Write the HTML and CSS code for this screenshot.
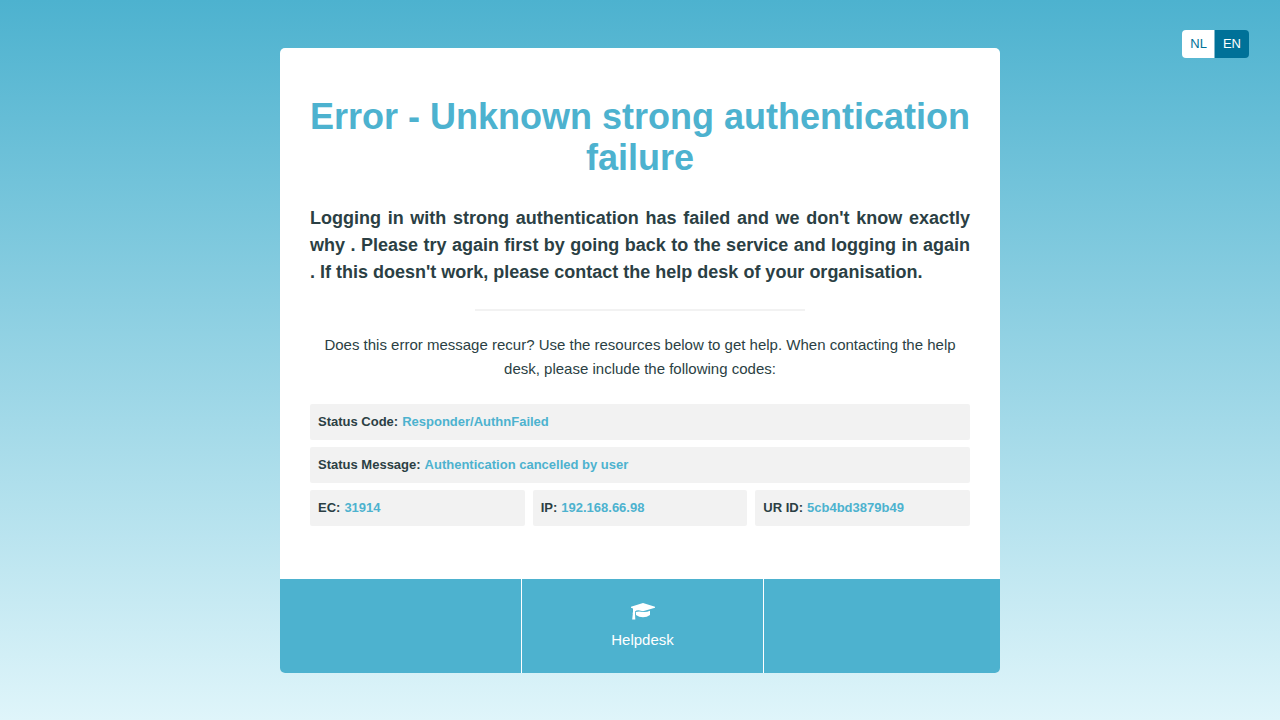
FILE: index.html
```html
<!DOCTYPE html>
<html lang="en">
<head>
<meta charset="utf-8">
<meta name="viewport" content="width=device-width, initial-scale=1">
<title>Error - Unknown strong authentication failure</title>
<link rel="stylesheet" href="styles.css">
</head>
<body>
<nav class="languages" aria-label="Language">
  <a class="language" href="#nl" lang="nl">NL</a>
  <a class="language language-active" href="#en" aria-current="true">EN</a>
</nav>
<main class="card">
  <div class="content">
    <h1 class="title">Error - Unknown strong authentication failure</h1>
    <p class="message">Logging in with strong authentication has failed and we don't know exactly why . Please try again first by going back to the service and logging in again . If this doesn't work, please contact the help desk of your organisation.</p>
    <hr class="divider">
    <p class="hint">Does this error message recur? Use the resources below to get help. When contacting the help desk, please include the following codes:</p>
    <dl class="codes">
      <div class="code code-wide"><dt>Status Code:</dt><dd>Responder/AuthnFailed</dd></div>
      <div class="code code-wide"><dt>Status Message:</dt><dd>Authentication cancelled by user</dd></div>
      <div class="code"><dt>EC:</dt><dd>31914</dd></div>
      <div class="code"><dt>IP:</dt><dd>192.168.66.98</dd></div>
      <div class="code"><dt>UR ID:</dt><dd>5cb4bd3879b49</dd></div>
    </dl>
  </div>
  <footer class="footer">
    <div class="footer-cell"></div>
    <a class="footer-cell" href="#helpdesk">
      <svg class="cap" viewBox="0 0 26 18" aria-hidden="true"><path d="M13 0 25 3.8V4.8L13 8.2 8.5 7.2Q6 7.2 5 8.4V11L5.3 16.5H2.2L2.8 11Q2.2 10 3 9.2V5.6L1 4.8V3.8Z"/><path d="M5.8 9Q9 7.8 13 9Q17 9.2 20 7.8V12Q17 14.2 13 14.2T6 12Z"/></svg>
      <span>Helpdesk</span>
    </a>
    <div class="footer-cell"></div>
  </footer>
</main>
</body>
</html>
```
FILE: styles.css
```css
* { box-sizing: border-box; }
body {
  margin: 0;
  min-height: 100vh;
  display: flex;
  align-items: center;
  justify-content: center;
  background: linear-gradient(#4db2cf, #dff5fa);
  color: #2b3f44;
  font-family: "Liberation Sans", Arial, sans-serif;
  font-size: 15px;
  line-height: 24px;
}
.languages {
  position: absolute;
  top: 30px;
  right: 31px;
  display: flex;
  border-radius: 4px;
  overflow: hidden;
  font-size: 13px;
  line-height: 28px;
}
.language { padding: 0 7px 0 8px; background: #fff; color: #007198; text-decoration: none; }
.language-active { padding: 0 8px; border-left: 1px solid #80b8cc; background: #007198; color: #fff; }
.card { width: 100%; max-width: 720px; border-radius: 5px; overflow: hidden; background: #fff; }
.content { padding: 48px 30px 53px; }
.title { margin: 0; color: #4db2cf; font-size: 36px; line-height: 41px; text-align: center; }
.message { margin: 27px 0 23px; font-size: 18px; font-weight: bold; line-height: 27px; text-align: justify; }
.divider { width: 50%; height: 2px; margin: 0 auto; border: 0; background: #f2f2f2; }
.hint { margin: 22px 0 23px; text-align: center; }
.codes { display: grid; grid-template-columns: repeat(3, 1fr); gap: 7px 8px; margin: 0; font-size: 13px; font-weight: bold; line-height: 20px; }
.code { display: flex; gap: 4px; padding: 8px; border-radius: 2px; background: #f2f2f2; }
.code-wide { grid-column: 1 / -1; }
.code dd { margin: 0; color: #4db2cf; }
.footer { display: grid; grid-template-columns: 241fr 242fr 237fr; background: #4db2cf; color: #fff; }
.footer-cell { min-height: 94px; padding: 24px 0 20px; display: flex; flex-direction: column; align-items: center; color: #fff; text-decoration: none; }
.footer-cell + .footer-cell { border-left: 1px solid #fff; }
.cap { width: 26px; height: 18px; margin-bottom: 7px; fill: #fff; }
```
